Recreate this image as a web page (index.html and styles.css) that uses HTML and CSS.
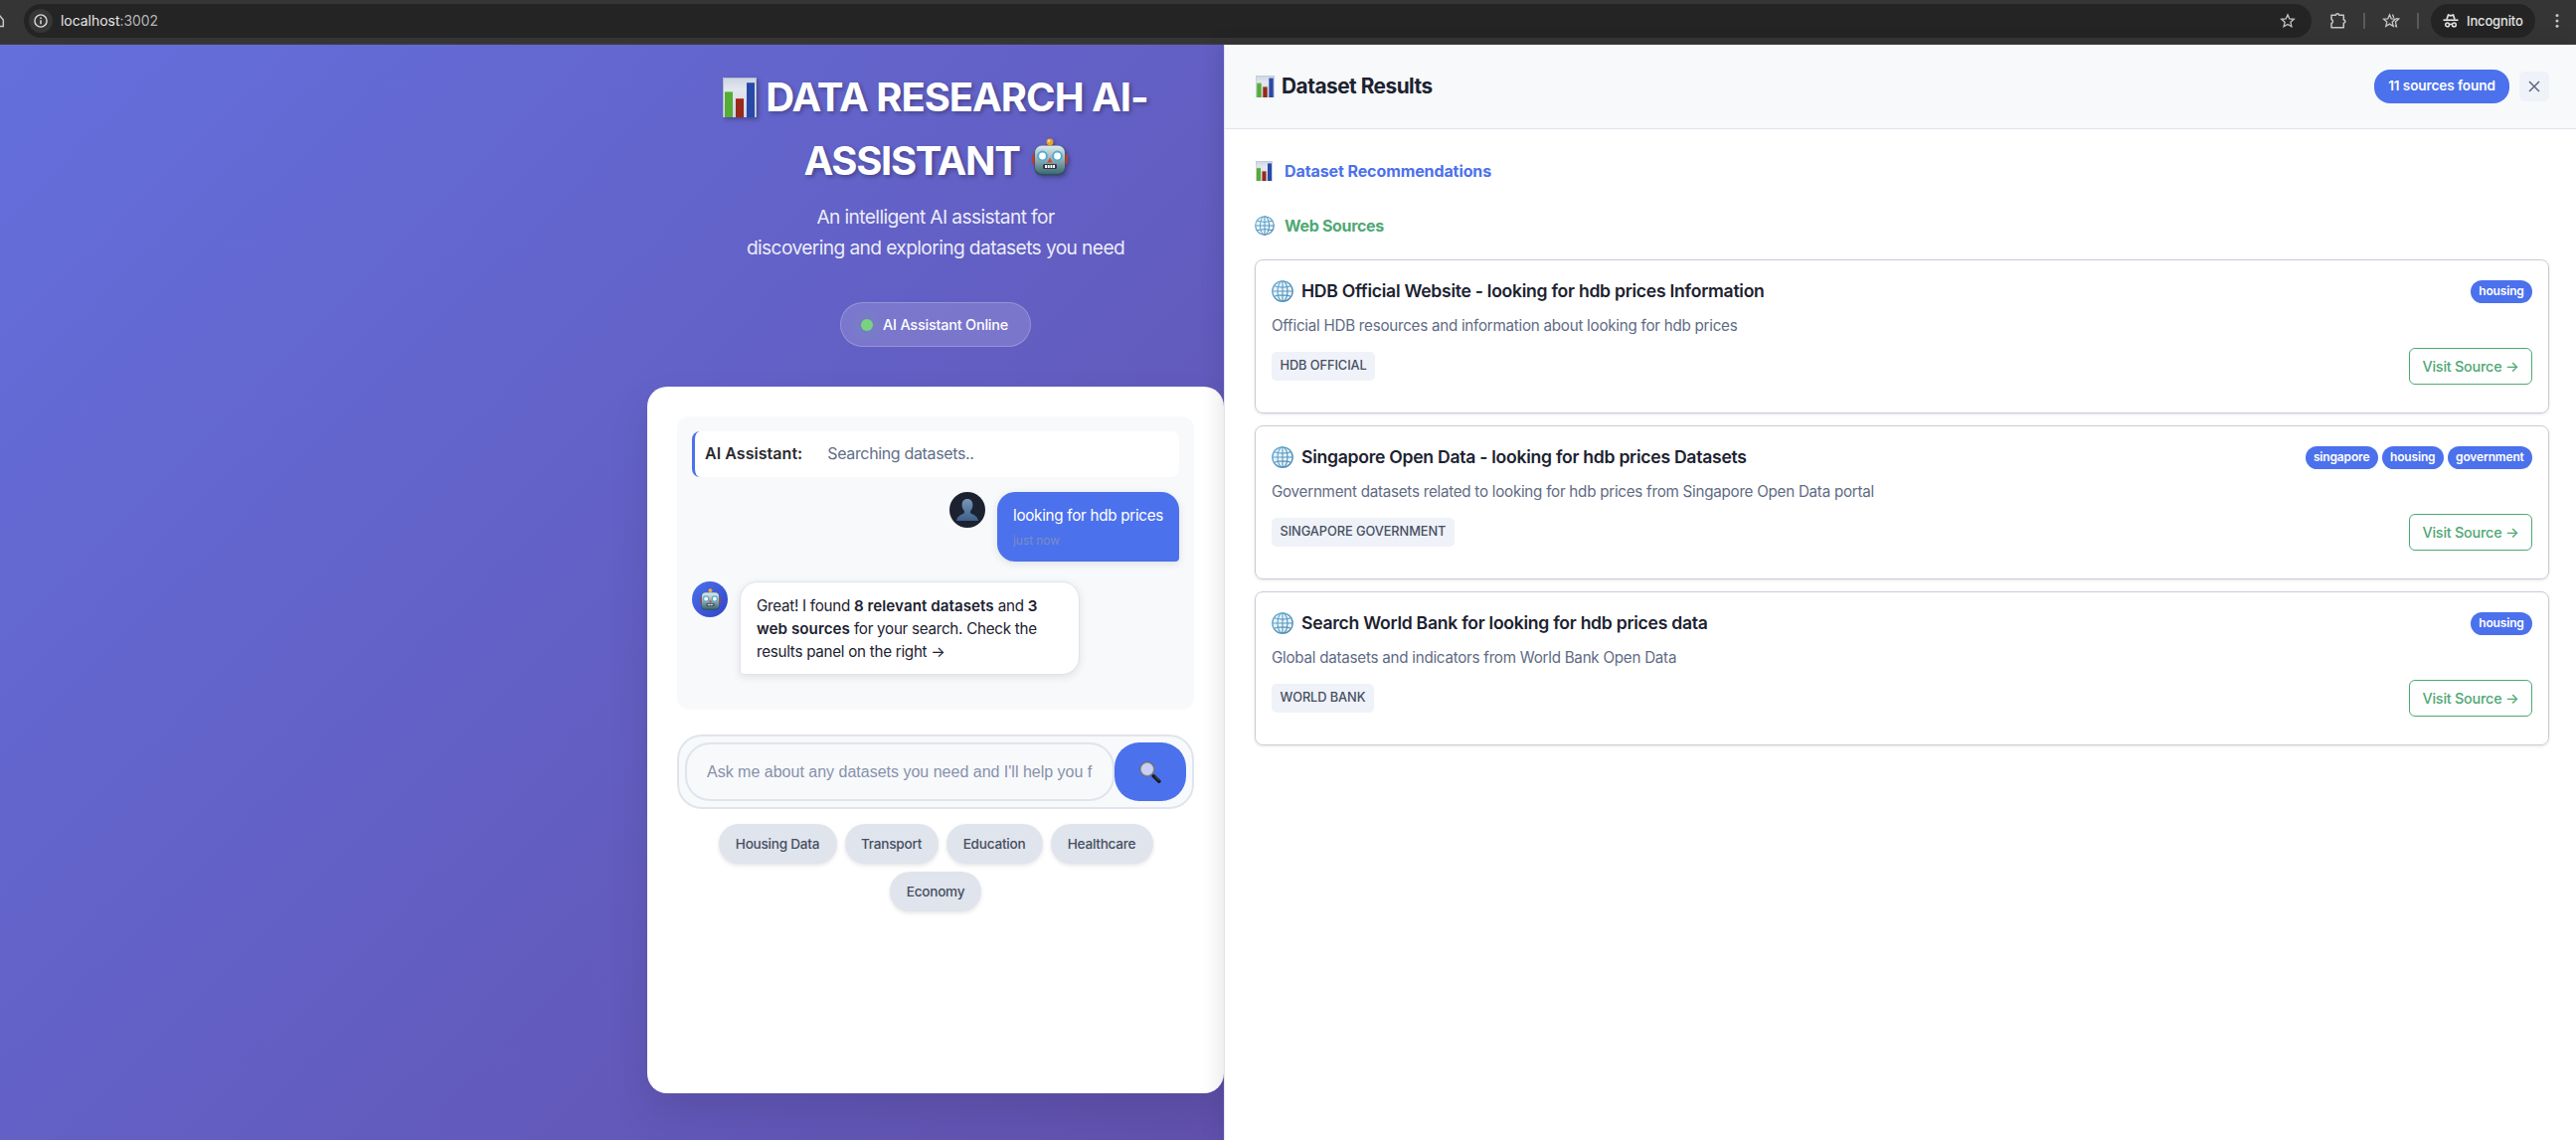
FILE: index.html
```html
<!DOCTYPE html>
<html lang="en">
<head>
<meta charset="utf-8">
<title>Data Research AI-Assistant</title>
<link rel="stylesheet" href="styles.css">
</head>
<body>
<svg class="defs" width="0" height="0" aria-hidden="true">
  <defs>
    <linearGradient id="g-paper" x1="0" y1="0" x2="0" y2="1"><stop offset="0" stop-color="#ccd3e0"/><stop offset=".3" stop-color="#e3e7ef"/><stop offset="1" stop-color="#cfd4e2"/></linearGradient>
    <linearGradient id="g-face" x1="0" y1="0" x2="0" y2="1"><stop offset="0" stop-color="#dcebec"/><stop offset=".45" stop-color="#98b5ba"/><stop offset="1" stop-color="#3d6874"/></linearGradient>
    <linearGradient id="g-globe" x1="0" y1="0" x2="1" y2="1"><stop offset="0" stop-color="#69aed3"/><stop offset="1" stop-color="#4684b0"/></linearGradient>
    <linearGradient id="g-person" x1="0" y1="0" x2="0" y2="1"><stop offset="0" stop-color="#7896b9"/><stop offset="1" stop-color="#3d5f88"/></linearGradient>
  </defs>
  <symbol id="chart" viewBox="0 0 34 40">
    <rect width="34" height="40" fill="url(#g-paper)"/>
    <path d="M.5 40V.5h33V40" fill="none" stroke="#b3bbd0"/>
    <rect x="2" y="14" width="8" height="26" fill="#55ad35"/><path d="M2 14.5h8" stroke="#7fd15c"/>
    <rect x="13" y="21" width="8" height="19" fill="#98291b"/><path d="M13 21.5h8" stroke="#c24a38"/>
    <rect x="24" y="5" width="8" height="35" fill="#2849a8"/><path d="M24 5.5h8" stroke="#4369cc"/>
  </symbol>
  <symbol id="robot" viewBox="0 0 36 38">
    <rect x="0" y="16" width="5" height="10" rx="2" fill="#b8402f"/><rect x="31" y="16" width="5" height="10" rx="2" fill="#b8402f"/>
    <path d="M13 9q0-3 5-3t5 3z" fill="#51394d"/><circle cx="18" cy="4" r="3.4" fill="#e9a22c"/><circle cx="17" cy="2.8" r="1.3" fill="#fbdc83"/>
    <rect x="2.5" y="7.5" width="31" height="30" rx="7" fill="#2c505c"/>
    <rect x="3" y="7.5" width="30" height="28.5" rx="7" fill="url(#g-face)"/>
    <circle cx="10.5" cy="18" r="4.4" fill="#fff" stroke="#55aad2" stroke-width="2"/><circle cx="25.5" cy="18" r="4.4" fill="#fff" stroke="#55aad2" stroke-width="2"/>
    <path d="M18 19.5l2.8 5h-5.6z" fill="#cd4c42"/>
    <rect x="11" y="26" width="14" height="5" rx="1.6" fill="#29393f"/>
    <path d="M13 28.5h10" stroke="#fff" stroke-width="3" stroke-dasharray="2 .7"/>
  </symbol>
  <symbol id="globe" viewBox="0 0 22 22">
    <circle cx="11" cy="11" r="10.2" fill="#e8f3f9"/>
    <g fill="none" stroke="url(#g-globe)" stroke-width="1.1">
      <circle cx="11" cy="11" r="10.2" stroke-width="1.3"/><ellipse cx="11" cy="11" rx="5" ry="10.2"/>
      <path d="M11.01.8L11 21.2M.8 11.01L21.2 11M2.5 5.8q8.500 2.600 17 0M2.500 16.200q8.500-2.600 17 0"/>
    </g>
  </symbol>
  <symbol id="person" viewBox="0 0 22 22">
    <path d="M11 0c3.500 0 5.400 2.500 5.400 6 0 2.700-.9 4.800-2.300 6v2.200c1.800 1.500 6.900 1.900 7.900 7.800H0c1-5.900 6.100-6.300 7.900-7.800V12c-1.400-1.200-2.300-3.300-2.300-6C5.600 2.500 7.500 0 11 0z" fill="url(#g-person)"/>
  </symbol>
  <symbol id="magnifier" viewBox="0 0 22 22">
    <path d="M12.500 13l2.300 2.300" stroke="#777" stroke-width="2"/><path d="M14.300 14.800l5.500 5.300" stroke="#171a1c" stroke-width="3.600" stroke-linecap="round"/><path d="M15.500 14.900l4.500 4.300" stroke="#6d7072" stroke-width=".7"/>
    <circle cx="7.900" cy="7.900" r="6.900" fill="#c8d0f6" stroke="#6b6b70" stroke-width="1.600"/><circle cx="7.900" cy="7.900" r="6.300" fill="none" stroke="#c7c9cd" stroke-width=".6"/>
  </symbol>
</svg>

<header class="browser-bar">
  <svg class="home" width="5" height="16" viewBox="0 0 5 16"><path d="M-4 7L0 3l3.300 4v6.500H-1V9" fill="none" stroke="#c7c7c7" stroke-width="1.500"/></svg>
  <div class="omnibox">
    <span class="site-info"><svg width="14" height="14" viewBox="0 0 14 14"><circle cx="7" cy="7" r="6.100" fill="none" stroke="#dcdcdc" stroke-width="1.400"/><path d="M7 6.300v4M7 3.500v1.500" stroke="#dcdcdc" stroke-width="1.500"/></svg></span>
    <span class="url"><b>localhost</b>:3002</span>
    <svg class="star" width="16" height="16" viewBox="0 0 16 16"><path d="M8 1.800l1.800 4.100 4.500.4-3.400 3 1 4.400L8 11.400l-3.900 2.300 1-4.400-3.400-3 4.500-.4z" fill="none" stroke="#c7c7c7" stroke-width="1.300"/></svg>
  </div>
  <svg class="puzzle" width="18" height="18" viewBox="0 0 18 18"><path d="M2 3.300h4.500a1.600 1.600 0 0 1 3.200 0h4.600v4.600a1.600 1.600 0 0 1 0 3.200v4.600H2v-4.200a2.100 2.100 0 0 0 0-4z" fill="none" stroke="#c7c7c7" stroke-width="1.500" stroke-linejoin="round"/></svg>
  <i class="divider"></i>
  <svg class="stars" width="18" height="16" viewBox="0 0 18 16"><path d="M7.500 1.800l1.700 4 4.300.4-3.300 2.900 1 4.300-3.700-2.300-3.700 2.300 1-4.300-3.300-2.900 4.300-.4zM10.500 1.500l1.300 3.400M14 5.700l2.800.3-3.400 3 1 4.700-1.700-1" fill="none" stroke="#c7c7c7" stroke-width="1.300"/></svg>
  <i class="divider"></i>
  <span class="incognito">
    <svg width="16" height="14" viewBox="0 0 16 14"><path d="M4 5.500L5.500 1l2.500.8L10.500 1 12 5.500" fill="none" stroke="#e3e3e3" stroke-width="1.700"/><path d="M.5 6.200h15" stroke="#e3e3e3" stroke-width="1.700"/><g fill="none" stroke="#e3e3e3" stroke-width="1.500"><circle cx="4.600" cy="10.900" r="1.900"/><circle cx="11.400" cy="10.900" r="1.900"/><path d="M6.500 10.700q1.500-1 3 0"/></g></svg>
    Incognito
  </span>
  <svg class="kebab" width="4" height="16" viewBox="0 0 4 16" fill="#c7c7c7"><circle cx="2" cy="2.500" r="1.500"/><circle cx="2" cy="8" r="1.500"/><circle cx="2" cy="13.300" r="1.500"/></svg>
</header>

<div class="app">
  <main class="assistant">
    <h1><span><svg class="h-chart"><use href="#chart"/></svg>DATA RESEARCH AI-</span><span>ASSISTANT<svg class="h-robot"><use href="#robot"/></svg></span></h1>
    <p class="subtitle">An intelligent AI assistant for<br>discovering and exploring datasets you need</p>
    <div class="status"><i class="dot"></i>AI Assistant Online</div>

    <section class="card">
      <div class="chat">
        <div class="progress"><strong>AI Assistant:</strong><span>Searching datasets..</span></div>
        <div class="message user">
          <span class="avatar"><svg width="22" height="22"><use href="#person"/></svg></span>
          <div class="bubble">looking for hdb prices<time>just now</time></div>
        </div>
        <div class="message bot">
          <span class="avatar"><svg width="21" height="22"><use href="#robot"/></svg></span>
          <div class="bubble">Great! I found <strong>8 relevant datasets</strong> and <strong>3<br>web sources</strong> for your search. Check the<br>results panel on the right →</div>
        </div>
      </div>
      <form class="search">
        <input type="text" placeholder="Ask me about any datasets you need and I'll help you f">
        <button type="button" aria-label="Search"><svg width="22" height="22"><use href="#magnifier"/></svg></button>
      </form>
      <div class="chips">
        <button type="button" class="w119">Housing Data</button><button type="button" class="w94">Transport</button><button type="button" class="w97">Education</button><button type="button" class="w103">Healthcare</button><button type="button" class="w92">Economy</button>
      </div>
    </section>
  </main>

  <aside class="panel">
    <header class="panel-head">
      <h2><svg width="19" height="22"><use href="#chart"/></svg>Dataset Results</h2>
      <span class="count">11 sources found</span>
      <button type="button" class="close" aria-label="Close"><svg width="12" height="12" viewBox="0 0 12 12"><path d="M1 1l10 10M11 1L1 11" stroke="#5c6880" stroke-width="1.500"/></svg></button>
    </header>
    <div class="panel-body">
      <h3 class="blue"><svg class="s-chart" width="17" height="20"><use href="#chart"/></svg>Dataset Recommendations</h3>
      <h3 class="green"><svg width="20" height="20"><use href="#globe"/></svg>Web Sources</h3>
      <article class="source">
        <div class="row top"><svg width="22" height="22"><use href="#globe"/></svg><h4>HDB Official Website - looking for hdb prices Information</h4><span class="tag">housing</span></div>
        <p>Official HDB resources and information about looking for hdb prices</p>
        <div class="row"><span class="origin">HDB OFFICIAL</span><a class="visit">Visit Source →</a></div>
      </article>
      <article class="source">
        <div class="row top"><svg width="22" height="22"><use href="#globe"/></svg><h4>Singapore Open Data - looking for hdb prices Datasets</h4><span class="tag">singapore</span><span class="tag">housing</span><span class="tag">government</span></div>
        <p>Government datasets related to looking for hdb prices from Singapore Open Data portal</p>
        <div class="row"><span class="origin">SINGAPORE GOVERNMENT</span><a class="visit">Visit Source →</a></div>
      </article>
      <article class="source">
        <div class="row top"><svg width="22" height="22"><use href="#globe"/></svg><h4>Search World Bank for looking for hdb prices data</h4><span class="tag">housing</span></div>
        <p>Global datasets and indicators from World Bank Open Data</p>
        <div class="row"><span class="origin">WORLD BANK</span><a class="visit">Visit Source →</a></div>
      </article>
    </div>
  </aside>
</div>
</body>
</html>
```
FILE: styles.css
```css
* { box-sizing: border-box; }

body {
  margin: 0;
  height: 1147px;
  overflow: hidden;
  display: flex;
  flex-direction: column;
  font-family: Inter, "Liberation Sans", sans-serif;
  color: #1c2230;
}

.defs { position: absolute; }
svg { display: block; flex: none; }
h1, h2, h3, h4, p { margin: 0; }
button { border: 0; padding: 0; font-family: inherit; }

/* Browser toolbar */
.browser-bar {
  height: 45px;
  flex: none;
  display: flex;
  align-items: center;
  padding-bottom: 3px;
  background: #353535;
  border-bottom: 1px solid #3d3d3d;
}
.home { margin-right: 19px; }
.omnibox {
  width: 2301px;
  height: 34px;
  border-radius: 17px;
  background: #242424;
  display: flex;
  align-items: center;
  padding: 0 16px 0 5px;
}
.site-info {
  width: 24px;
  height: 24px;
  border-radius: 50%;
  background: #363636;
  display: grid;
  place-items: center;
  margin-right: 8px;
}
.url { font-size: 14px; color: #b4b4b4; flex: 1; letter-spacing: -.003em; }
.url b { font-weight: 400; color: #e6e6e6; }
.puzzle { margin-left: 18px; }
.divider { width: 2px; height: 16px; background: #5a5a5a; margin-left: 16px; }
.stars { margin: 0 1px 0 17px; }
.incognito {
  width: 105px;
  height: 34px;
  border-radius: 17px;
  background: #242424;
  color: #e3e3e3;
  font-size: 13px;
  font-weight: 500;
  letter-spacing: -.012em;
  display: flex;
  align-items: center;
  gap: 8px;
  padding-left: 12px;
  margin: 0 20px 0 12px;
}

/* Page */
.app {
  flex: 1;
  display: flex;
  background: linear-gradient(135deg, #646fdc 0%, #603f93 100%);
}
.assistant {
  width: 1231px;
  flex: none;
  padding: 21px 0 0 651px;
  display: flex;
  flex-direction: column;
  align-items: center;
}
h1 {
  color: #fff;
  font-size: 40px;
  line-height: 64px;
  font-weight: 700;
  letter-spacing: -.026em;
  white-space: nowrap;
  text-shadow: 2px 2px 4px rgba(0, 0, 0, .3);
}
h1 span { display: flex; align-items: center; justify-content: center; }
h1 svg { filter: drop-shadow(2px 2px 2px rgba(0, 0, 0, .3)); }
h1 span + span { letter-spacing: -.034em; }
.h-chart { width: 34px; height: 40px; margin-right: 9px; }
.h-robot { width: 36px; height: 38px; margin: -8px 0 0 12px; }
.subtitle {
  margin-top: 9px;
  color: rgba(255, 255, 255, .9);
  font-size: 19.2px;
  line-height: 31px;
  text-align: center;
  letter-spacing: -.032em;
}
.status {
  margin: 39px 0 40px;
  width: 192px;
  height: 45px;
  border: 1px solid rgba(255, 255, 255, .22);
  border-radius: 23px;
  background: rgba(255, 255, 255, .15);
  color: #fff;
  font-size: 14.4px;
  font-weight: 500;
  letter-spacing: -.013em;
  display: flex;
  align-items: center;
  gap: 10px;
  padding-left: 20px;
  white-space: nowrap;
}
.dot {
  width: 12px;
  height: 12px;
  border-radius: 50%;
  background: #78d37d;
  box-shadow: 0 0 0 9px rgba(120, 211, 125, .05);
}
.card {
  width: 580px;
  height: 711px;
  padding: 30px;
  border-radius: 20px;
  background: #fff;
  box-shadow: 0 20px 40px rgba(0, 0, 0, .1);
}
.chat {
  height: 295px;
  padding: 15px;
  border-radius: 12px;
  background: #f7f9fb;
}
.progress {
  height: 46px;
  margin-bottom: 15px;
  padding: 0 0 2px 10px;
  border-left: 3px solid #4c71ec;
  border-radius: 8px;
  background: #fff;
  display: flex;
  align-items: center;
  gap: 25px;
  font-size: 16px;
  letter-spacing: -.022em;
  color: #626e87;
}
.progress strong { font-weight: 600; letter-spacing: .003em; color: #2a2a2e; }
.message { display: flex; align-items: flex-start; gap: 12px; margin-bottom: 20px; }
.user { justify-content: flex-end; }
.avatar {
  width: 36px;
  height: 36px;
  border-radius: 50%;
  display: grid;
  place-items: center;
}
.user .avatar { background: #1c2230; }
.bot .avatar { background: linear-gradient(135deg, #4c71ec, #3144c8); }
.bubble {
  padding: 13px 16px 0;
  border-radius: 18px 18px 4px 18px;
  font-size: 15.2px;
  line-height: 22.8px;
  letter-spacing: -.018em;
  white-space: nowrap;
  box-shadow: 0 2px 8px rgba(0, 0, 0, .1);
}
.user .bubble { width: 183px; height: 70px; background: #4c71ec; color: #fff; }
.bot .bubble {
  width: 342px;
  height: 94px;
  background: #fff;
  border: 1px solid #e0e4ec;
  border-radius: 18px 18px 18px 4px;
}
.bubble strong { font-weight: 600; letter-spacing: .002em; }
.bubble time { display: block; margin-top: 4px; font-size: 12px; line-height: 18px; color: #788dc6; letter-spacing: -.005em; }

.search {
  height: 75px;
  margin-top: 25px;
  padding: 6px;
  border: 2px solid #e0e4ec;
  border-radius: 25px;
  background: #f7f9fb;
  display: flex;
}
.search input {
  width: 432px;
  padding: 0 20px;
  border: 2px solid #e0e4ec;
  border-radius: 25px;
  background: #f7f9fb;
  font: 16px "Liberation Sans", sans-serif;
}
.search input::placeholder { color: #8791aa; opacity: 1; }
.search button {
  width: 72px;
  border-radius: 25px;
  background: #4c71ec;
  display: grid;
  place-items: center;
}
.chips { margin-top: 15px; display: flex; flex-wrap: wrap; justify-content: center; gap: 8px; }
.chips button {
  height: 40px;
  padding-bottom: 1px;
  border-radius: 20px;
  background: #e0e4ec;
  color: #464f62;
  font-size: 13.6px;
  font-weight: 500;
  letter-spacing: -.018em;
  box-shadow: 0 2px 4px rgba(0, 0, 0, .1);
}
.chips .w119 { width: 119px; }
.chips .w94 { width: 94px; }
.chips .w97 { width: 97px; }
.chips .w103 { width: 103px; }
.chips .w92 { width: 92px; }

/* Results panel */
.panel {
  flex: 1;
  position: relative;
  background: #fff;
  border-left: 1px solid #e0e4ec;
  box-shadow: -4px 0 20px rgba(0, 0, 0, .1);
}
.panel-head {
  height: 85px;
  padding: 0 27px 0 31px;
  display: flex;
  align-items: center;
  background: #f8f9fb;
  border-bottom: 1px solid #e0e4ec;
}
h2 {
  flex: 1;
  display: flex;
  align-items: center;
  gap: 7px;
  padding-bottom: 1px;
  font-size: 20.8px;
  font-weight: 700;
  letter-spacing: -.023em;
}
.count {
  width: 136px;
  height: 34px;
  border-radius: 16px;
  background: #4c71ec;
  color: #fff;
  font-size: 13.6px;
  font-weight: 600;
  letter-spacing: -.008em;
  line-height: 33px;
  text-align: center;
}
.close {
  width: 30px;
  height: 30px;
  margin-left: 10px;
  border-radius: 5px;
  background: #eff2f8;
  display: grid;
  place-items: center;
}
.panel-body { padding: 29px 27px 0 30px; }
h3 {
  height: 26px;
  margin-bottom: 29px;
  display: flex;
  align-items: center;
  gap: 10px;
  font-size: 16px;
  font-weight: 700;
  letter-spacing: -.006em;
}
.s-chart { margin: 0 2px 0 1px; }
.blue { color: #4c71ec; }
.green { margin-bottom: 21px; color: #50a874; letter-spacing: -.02em; }
.source {
  height: 155px;
  margin-bottom: 12px;
  padding: 16px;
  border: 1px solid #c9ccd7;
  border-radius: 8px;
  box-shadow: 0 1px 3px rgba(0, 0, 0, .1);
}
.row { display: flex; align-items: center; justify-content: space-between; }
.top { height: 30px; gap: 4px; }
h4 {
  flex: 1;
  margin: -1px 0 0 4px;
  font-size: 17.6px;
  font-weight: 600;
  letter-spacing: -.0158em;
}
.tag {
  height: 23px;
  padding: 0 8.300px;
  border-radius: 12px;
  background: #4c71ec;
  color: #fff;
  font-size: 12px;
  font-weight: 600;
  letter-spacing: -.013em;
  line-height: 22.500px;
}
.source p {
  margin: 8px 0 10px;
  font-size: 15.2px;
  line-height: 24px;
  letter-spacing: -.0172em;
  color: #5f6b85;
}
.origin {
  height: 29px;
  padding: 0 8.500px;
  border-radius: 5px;
  background: #eff2f8;
  color: #464f62;
  font-size: 12.8px;
  font-weight: 500;
  letter-spacing: -.006em;
  line-height: 27px;
}
.visit {
  width: 124px;
  height: 37px;
  border: 1px solid #4caa74;
  border-radius: 6px;
  color: #50a874;
  font-size: 14.4px;
  font-weight: 500;
  letter-spacing: -.016em;
  line-height: 35px;
  text-align: center;
}
```
